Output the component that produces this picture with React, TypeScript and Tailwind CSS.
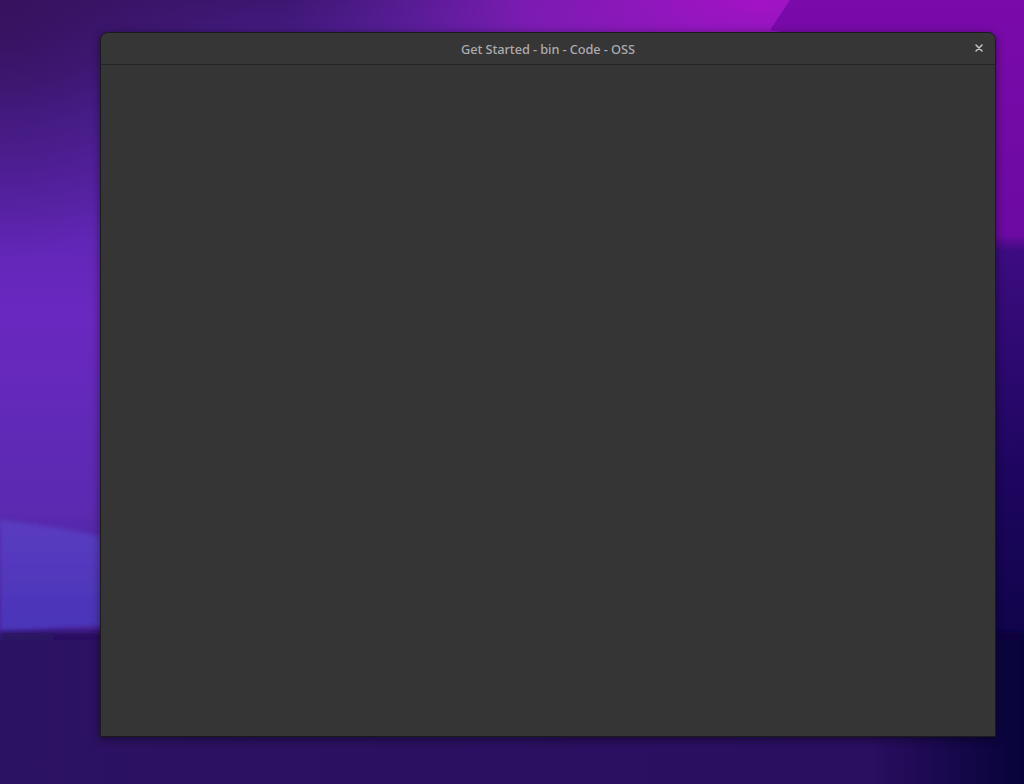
import React from "react";

function Wallpaper() {
  return (
    <svg className="absolute inset-0" width="1024" height="784" viewBox="0 0 1024 784">
      <defs>
        <linearGradient id="base" x1="0" y1="0" x2="0" y2="1">
          <stop offset="0" stopColor="#3d1670" />
          <stop offset="0.15" stopColor="#5424a8" />
          <stop offset="0.4" stopColor="#6a28c0" />
          <stop offset="0.65" stopColor="#5a2ab0" />
          <stop offset="1" stopColor="#2a0e62" />
        </linearGradient>
        <radialGradient id="glow" gradientUnits="userSpaceOnUse" cx="760" cy="0" r="480" gradientTransform="translate(760 0) scale(1 0.35) translate(-760 0)">
          <stop offset="0" stopColor="#a412c6" />
          <stop offset="0.5" stopColor="#8a1cc0" stopOpacity="0.8" />
          <stop offset="1" stopColor="#6a28c0" stopOpacity="0" />
        </radialGradient>
        <radialGradient id="corner" gradientUnits="userSpaceOnUse" cx="0" cy="0" r="260">
          <stop offset="0" stopColor="#36125e" />
          <stop offset="1" stopColor="#36125e" stopOpacity="0" />
        </radialGradient>
        <linearGradient id="right" x1="0" y1="0" x2="0" y2="1">
          <stop offset="0" stopColor="#7a0aaa" />
          <stop offset="0.3" stopColor="#6c0aa2" />
          <stop offset="0.32" stopColor="#3c0c80" />
          <stop offset="0.6" stopColor="#1e0660" />
          <stop offset="1" stopColor="#050238" />
        </linearGradient>
        <linearGradient id="band" x1="0" y1="0" x2="0" y2="1">
          <stop offset="0" stopColor="#5a3cc0" />
          <stop offset="1" stopColor="#4a34b8" />
        </linearGradient>
        <linearGradient id="bottom" x1="0" y1="0" x2="1" y2="0">
          <stop offset="0" stopColor="#2c1262" />
          <stop offset="0.85" stopColor="#2a0e60" />
          <stop offset="1" stopColor="#06033a" />
        </linearGradient>
        <filter id="soft" x="-10%" y="-10%" width="120%" height="120%">
          <feGaussianBlur stdDeviation="2" />
        </filter>
      </defs>
      <rect width="1024" height="784" fill="url(#base)" />
      <rect width="1024" height="200" fill="url(#glow)" />
      <rect width="400" height="300" fill="url(#corner)" />
      <polygon points="790,0 1024,0 1024,784 930,784 930,60 770,30" fill="url(#right)" />
      <polygon points="0,520 60,528 120,540 120,625 60,628 0,632" fill="url(#band)" filter="url(#soft)" />
      <rect x="0" y="632" width="1024" height="152" fill="url(#bottom)" filter="url(#soft)" />
      <rect x="0" y="640" width="1024" height="144" fill="url(#bottom)" />
    </svg>
  );
}

export default function App() {
  return (
    <div className="relative w-[1024px] h-[784px] overflow-hidden bg-[#2a0e62]">
      <Wallpaper />
      <div className="absolute left-[100px] top-[32px] w-[896px] h-[705px] flex flex-col rounded-t-[8px] border border-[#1a1a1a] bg-[#353535] shadow-[0_2px_10px_rgba(0,0,0,0.45)] overflow-hidden">
        <div className="relative h-[32px] shrink-0 flex items-center justify-center border-b border-[#242424] bg-[#363636]">
          <span className="pt-[2px] text-[12.8px] text-[#acacac] font-['Noto_Sans',sans-serif] font-medium tracking-[-0.1px]">
            Get Started - bin - Code - OSS
          </span>
          <span className="absolute right-[10px] top-[9px] w-[12px] h-[12px] flex items-center justify-center">
            <svg width="8" height="8" viewBox="0 0 8 8">
              <path d="M1 1L7 7M7 1L1 7" stroke="#c4c4c4" strokeWidth="1.5" strokeLinecap="round" />
            </svg>
          </span>
        </div>
        <div className="flex-1 bg-[#353535]" />
      </div>
    </div>
  );
}
